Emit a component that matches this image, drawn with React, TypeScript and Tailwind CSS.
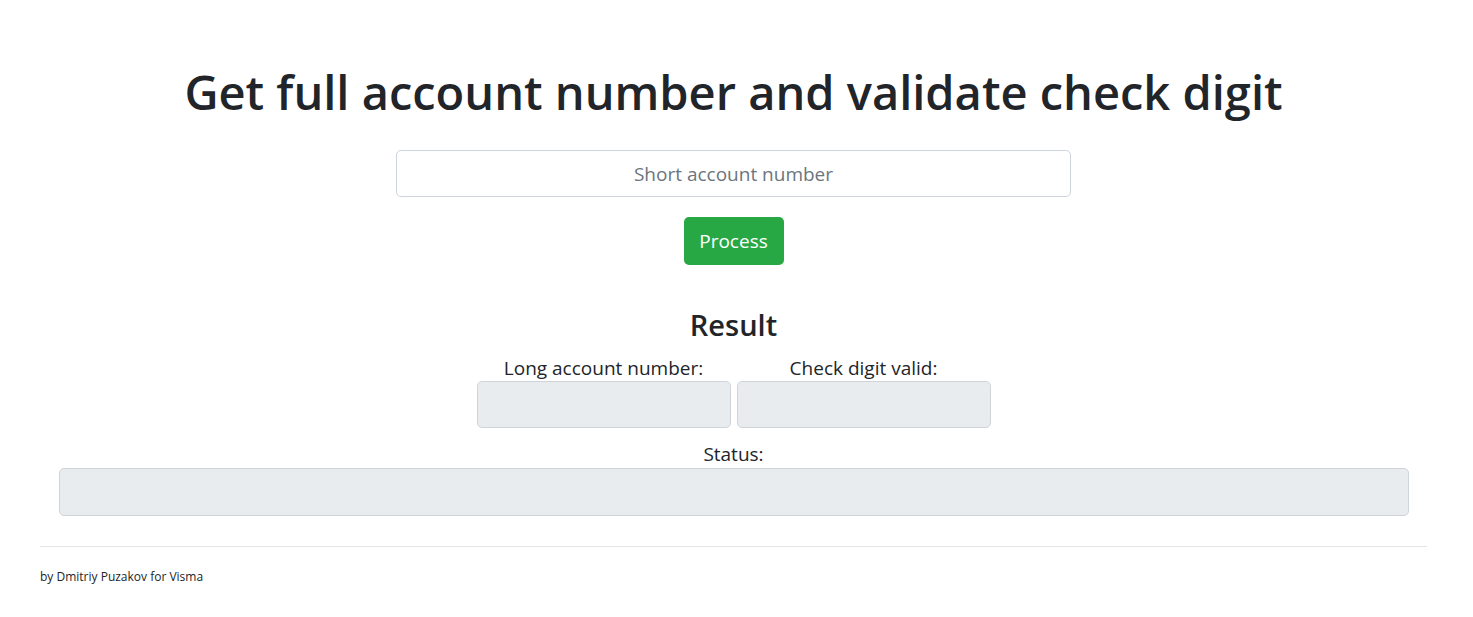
import React from 'react';

const FONT = { fontFamily: '"Open Sans", "Noto Sans", Arial, sans-serif' };

export default function App() {
  return (
    <div className="min-h-screen bg-white text-[#212529]" style={FONT}>
      <div className="pl-[40px] pr-[46px]">
        <h1 className="pt-[64px] text-center text-[47px] font-semibold leading-[1.2]">
          Get full account number and validate check digit
        </h1>

        <div className="mt-[30px] flex justify-center">
          <input
            type="text"
            placeholder="Short account number"
            className="h-[47px] w-[675px] rounded-[5px] border border-[#ced4da] bg-white px-4 text-center text-[19px] text-[#495057] placeholder:text-[#6c757d] focus:outline-none"
          />
        </div>

        <div className="mt-[20px] flex justify-center">
          <button className="h-[48px] w-[100px] rounded-[5px] bg-[#28a745] text-[19px] text-white">
            Process
          </button>
        </div>

        <h3 className="mt-[43px] text-center text-[29px] font-semibold leading-[1.2]">Result</h3>

        <div className="mt-[13px] flex justify-center gap-[6px]">
          <div className="flex w-[254px] flex-col items-center">
            <span className="text-[19px] leading-[24px]">Long account number:</span>
            <div className="mt-[1px] h-[47px] w-full rounded-[5px] border border-[#ced4da] bg-[#e9ecef]" />
          </div>
          <div className="flex w-[254px] flex-col items-center">
            <span className="text-[19px] leading-[24px]">Check digit valid:</span>
            <div className="mt-[1px] h-[47px] w-full rounded-[5px] border border-[#ced4da] bg-[#e9ecef]" />
          </div>
        </div>

        <div className="mt-[14px] flex flex-col items-center">
          <span className="text-[19px] leading-[24px]">Status:</span>
          <div className="mt-[2px] h-[48px] w-[1350px] rounded-[5px] border border-[#ced4da] bg-[#e9ecef]" />
        </div>

        <hr className="mt-[30px] border-t border-[#e5e5e5]" />
        <footer className="mt-[22px] text-[12px] leading-[16px]">by Dmitriy Puzakov for Visma</footer>
      </div>
    </div>
  );
}
